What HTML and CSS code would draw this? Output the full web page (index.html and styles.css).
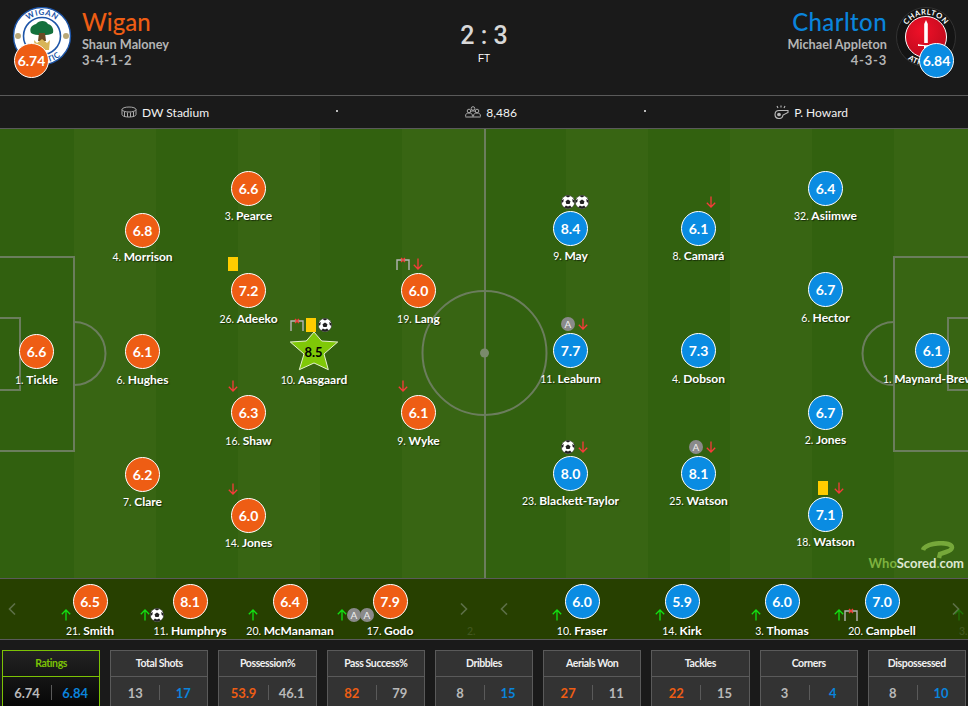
FILE: index.html
```html
<!DOCTYPE html>
<html lang="en">
<head>
<meta charset="utf-8">
<title>Wigan 2 : 3 Charlton</title>
<link rel="stylesheet" href="styles.css">
</head>
<body>
<svg class="defs" width="0" height="0" aria-hidden="true">
  <symbol id="ball" viewBox="0 0 14 14">
    <circle cx="7" cy="7" r="6.7" fill="#fff" stroke="#222" stroke-width=".5"/>
    <path d="M7 4.400 9.500 6.200 8.600 9.100H5.400L4.500 6.200Z" fill="#222"/>
    <path d="M7 .3 9.600 1 7 2.400 4.400 1ZM13.400 5.200 13.600 8 11.700 6.900 11.200 4ZM.6 5.200.4 8 2.300 6.900 2.800 4ZM3.100 12.400 4.900 10.600 7 11.600 9.100 10.600 10.900 12.400 7 13.700Z" fill="#222"/>
  </symbol>
  <symbol id="down" viewBox="0 0 12 12">
    <path d="M6 .5V11M1.800 6.800 6 11l4.200-4.200" fill="none" stroke="#f93a3a" stroke-width="1.300"/>
  </symbol>
  <symbol id="up" viewBox="0 0 12 12">
    <path d="M6 11.500V1M1.800 5.200 6 1l4.200 4.200" fill="none" stroke="#12e012" stroke-width="1.300"/>
  </symbol>
  <symbol id="miss" viewBox="0 0 14 14">
    <path d="M1 13V3h12v10" fill="none" stroke="#b5b5b5" stroke-width="1.400"/>
    <path d="M5 1l4 4M9 1L5 5" fill="none" stroke="#f33a3a" stroke-width="1.300"/>
  </symbol>
</svg>

<header class="header">
  <div class="team">
    <div class="crest">
      <svg class="crest-svg" viewBox="0 0 60 60" width="60" height="60">
        <defs>
          <path id="wigan-top" d="M9 29a21 21 0 0 1 42 0"/>
          <path id="wigan-bot" d="M3 29a27 27 0 0 0 54 0"/>
        </defs>
        <circle cx="30" cy="29" r="28.500" fill="#fff" stroke="#1d55a8" stroke-width="1.400"/>
        <circle cx="30" cy="29" r="18.500" fill="#fff" stroke="#1d55a8" stroke-width="1.600"/>
        <text class="crest-wigan"><textPath href="#wigan-top" startOffset="50%" text-anchor="middle">WIGAN</textPath></text>
        <text class="crest-wigan"><textPath href="#wigan-bot" startOffset="50%" text-anchor="middle">ATHLETIC</textPath></text>
        <circle cx="6" cy="29" r="3" fill="#b9a877"/>
        <circle cx="54" cy="29" r="3" fill="#b9a877"/>
        <path d="M19 26c-2-5 1-8 5-9 3-4 10-4 12 0 4 1 6 5 5 9-4 3-18 3-22 0Z" fill="#14703c"/>
        <path d="M27 26h6l1 8h-8Z" fill="#6d4a24"/>
        <path d="M22 33l3 3 5-4 5 4 3-3-1 10H23Z" fill="#d8b558"/>
      </svg>
      <span class="team-rating home-bg">6.74</span>
    </div>
    <div class="team-text">
      <h1 class="team-name home-text">Wigan</h1>
      <div class="manager">Shaun Maloney</div>
      <div class="formation">3-4-1-2</div>
    </div>
  </div>
  <div class="score">
    <div class="score-value">2 : 3</div>
    <div class="score-status">FT</div>
  </div>
  <div class="team team-away">
    <div class="team-text">
      <h1 class="team-name away-text">Charlton</h1>
      <div class="manager">Michael Appleton</div>
      <div class="formation">4-3-3</div>
    </div>
    <div class="crest">
      <svg class="crest-svg" viewBox="0 0 60 60" width="60" height="60">
        <defs>
          <path id="charlton-top" d="M7.500 30a22.500 22.500 0 0 1 45 0"/>
          <path id="charlton-bot" d="M1.500 30a28.500 28.500 0 0 0 57 0"/>
          <radialGradient id="red" cx=".4" cy=".35" r=".8"><stop offset="0" stop-color="#f01028"/><stop offset="1" stop-color="#b80a1c"/></radialGradient>
        </defs>
        <circle cx="30" cy="30" r="29.500" fill="#141414" stroke="#333"/>
        <circle cx="30" cy="30" r="20.500" fill="url(#red)" stroke="#fff"/>
        <text class="crest-charlton"><textPath href="#charlton-top" startOffset="50%" text-anchor="middle">CHARLTON</textPath></text>
        <text class="crest-charlton"><textPath href="#charlton-bot" startOffset="50%" text-anchor="middle">ATHLETIC</textPath></text>
        <path d="M30 13l1.800 4V36h-3.600V17Z" fill="#fff"/>
        <path d="M22 37c3 1.500 13 1.500 16 0v2H32v8h-4v-8H22Z" fill="#fff"/>
      </svg>
      <span class="team-rating away-bg">6.84</span>
    </div>
  </div>
</header>

<section class="info">
  <div class="info-item">
    <svg class="info-icon" viewBox="0 0 16 12" width="16" height="12"><g fill="none" stroke="#aaa"><ellipse cx="8" cy="3.500" rx="7" ry="2.500"/><path d="M1 3.500v5c0 1.500 3 2.500 7 2.500s7-1 7-2.500v-5M3.500 6v5M6.500 6.500v4.500M9.500 6.500v4.500M12.500 6v5"/></g></svg>
    <span>DW Stadium</span>
  </div>
  <span class="info-dot"></span>
  <div class="info-item">
    <svg class="info-icon" viewBox="0 0 16 12" width="16" height="12"><g fill="none" stroke="#aaa"><circle cx="4" cy="5" r="1.800"/><circle cx="12" cy="5" r="1.800"/><circle cx="8" cy="2.500" r="1.800"/><path d="M.5 10.500c0-3 1.500-3.500 3.500-3.500s3.500.5 3.500 3.500M8.500 10.500c0-3 1.500-3.500 3.500-3.500s3.500.5 3.500 3.500M.5 11h15M5 6c1-1.500 5-1.500 6 0"/></g></svg>
    <span>8,486</span>
  </div>
  <span class="info-dot"></span>
  <div class="info-item">
    <svg class="info-icon" viewBox="0 0 16 14" width="16" height="14"><g fill="none" stroke="#bbb" stroke-width="1.100"><path d="M15 5.500H6a4 4 0 1 0 4 4.500l5-2.500Z"/><circle cx="6" cy="9.500" r="1.300" fill="#bbb"/><path d="M5 3l-1-2M8 2.500V.5M11 3l1-2"/></g></svg>
    <span>P. Howard</span>
  </div>
</section>

<section class="pitch">
  <svg class="lines" viewBox="0 0 968 449" width="968" height="449" aria-hidden="true">
    <g fill="none" stroke="#6b7d5d" stroke-width="2">
      <path d="M485 0V449"/>
      <circle cx="484.500" cy="224" r="62"/>
      <path d="M-2 128H74V322H-2M-2 189H20V261H-2"/>
      <path d="M74 193a31.500 31.500 0 0 1 0 63"/>
      <path d="M970 128H894V322H970M970 189H948V261H970"/>
      <path d="M894 193a31.500 31.500 0 0 0 0 63"/>
    </g>
    <circle cx="484.500" cy="224" r="4.500" fill="#7a8a6c"/>
  </svg>

  <div class="player p-tickle"><span class="rating home-bg">6.6</span><span class="name">1. <b>Tickle</b></span></div>
  <div class="player p-morrison"><span class="rating home-bg">6.8</span><span class="name">4. <b>Morrison</b></span></div>
  <div class="player p-hughes"><span class="rating home-bg">6.1</span><span class="name">6. <b>Hughes</b></span></div>
  <div class="player p-clare"><span class="rating home-bg">6.2</span><span class="name">7. <b>Clare</b></span></div>
  <div class="player p-pearce"><span class="rating home-bg">6.6</span><span class="name">3. <b>Pearce</b></span></div>
  <div class="player p-adeeko"><div class="marks"><span class="card"></span></div><span class="rating home-bg">7.2</span><span class="name">26. <b>Adeeko</b></span></div>
  <div class="player p-shaw"><div class="marks"><svg class="arrow"><use href="#down"/></svg></div><span class="rating home-bg">6.3</span><span class="name">16. <b>Shaw</b></span></div>
  <div class="player p-jones"><div class="marks"><svg class="arrow"><use href="#down"/></svg></div><span class="rating home-bg">6.0</span><span class="name">14. <b>Jones</b></span></div>
  <div class="player player-star p-aasgaard">
    <div class="marks"><svg class="icon"><use href="#miss"/></svg><span class="card"></span><svg class="icon"><use href="#ball"/></svg></div>
    <svg class="star" viewBox="0 0 48 40" width="48" height="40"><path d="M24 1 31.700 10 47.700 11 34 23 38.300 38.700 24 32 9.300 38.700 14 23 .3 11 16.300 10Z" fill="#7fc808" stroke="#e6f2cf" stroke-width="1"/></svg>
    <span class="star-value">8.5</span>
    <span class="name">10. <b>Aasgaard</b></span>
  </div>
  <div class="player p-lang"><div class="marks"><svg class="icon"><use href="#miss"/></svg><svg class="arrow"><use href="#down"/></svg></div><span class="rating home-bg">6.0</span><span class="name">19. <b>Lang</b></span></div>
  <div class="player p-wyke"><div class="marks"><svg class="arrow"><use href="#down"/></svg></div><span class="rating home-bg">6.1</span><span class="name">9. <b>Wyke</b></span></div>

  <div class="player p-may"><div class="marks marks-tight"><svg class="icon"><use href="#ball"/></svg><svg class="icon"><use href="#ball"/></svg></div><span class="rating away-bg">8.4</span><span class="name">9. <b>May</b></span></div>
  <div class="player p-leaburn"><div class="marks"><span class="assist">A</span><svg class="arrow"><use href="#down"/></svg></div><span class="rating away-bg">7.7</span><span class="name">11. <b>Leaburn</b></span></div>
  <div class="player p-blackett"><div class="marks"><svg class="icon"><use href="#ball"/></svg><svg class="arrow"><use href="#down"/></svg></div><span class="rating away-bg">8.0</span><span class="name">23. <b>Blackett-Taylor</b></span></div>
  <div class="player p-camara"><div class="marks"><svg class="arrow"><use href="#down"/></svg></div><span class="rating away-bg">6.1</span><span class="name">8. <b>Camará</b></span></div>
  <div class="player p-dobson"><span class="rating away-bg">7.3</span><span class="name">4. <b>Dobson</b></span></div>
  <div class="player p-watson25"><div class="marks"><span class="assist">A</span><svg class="arrow"><use href="#down"/></svg></div><span class="rating away-bg">8.1</span><span class="name">25. <b>Watson</b></span></div>
  <div class="player p-asiimwe"><span class="rating away-bg">6.4</span><span class="name">32. <b>Asiimwe</b></span></div>
  <div class="player p-hector"><span class="rating away-bg">6.7</span><span class="name">6. <b>Hector</b></span></div>
  <div class="player p-jones2"><span class="rating away-bg">6.7</span><span class="name">2. <b>Jones</b></span></div>
  <div class="player p-watson18"><div class="marks"><span class="card"></span><svg class="arrow"><use href="#down"/></svg></div><span class="rating away-bg">7.1</span><span class="name">18. <b>Watson</b></span></div>
  <div class="player p-maynard"><span class="rating away-bg">6.1</span><span class="name">1. <b>Maynard-Brew</b></span></div>

  <div class="brand">
    <svg class="brand-mark" viewBox="0 0 36 18" width="36" height="18"><path d="M3 9C5 3 20 1 28 3c6 2 5 6-2 8l-6 2-1 4" fill="none" stroke="#76a83a" stroke-width="4.500"/></svg>
    <div class="brand-text"><span class="brand-who">Who</span>Scored<span class="brand-who">.</span>com</div>
  </div>
</section>

<section class="bench">
  <div class="bench-half">
    <span class="chev"><svg viewBox="0 0 8 12" width="8" height="12"><path d="M7 .5 1.500 6 7 11.500" fill="none" stroke="#5d6f47" stroke-width="1.600"/></svg></span>
    <div class="bench-track">
      <div class="sub"><div class="marks s-smith"><svg class="arrow"><use href="#up"/></svg></div><span class="rating home-bg">6.5</span><span class="name">21. <b>Smith</b></span></div>
      <div class="sub"><div class="marks marks-over s-humphrys"><svg class="arrow"><use href="#up"/></svg><svg class="icon"><use href="#ball"/></svg></div><span class="rating home-bg">8.1</span><span class="name">11. <b>Humphrys</b></span></div>
      <div class="sub"><div class="marks s-mcmanaman"><svg class="arrow"><use href="#up"/></svg></div><span class="rating home-bg">6.4</span><span class="name">20. <b>McManaman</b></span></div>
      <div class="sub"><div class="marks marks-over s-godo"><svg class="arrow"><use href="#up"/></svg><span class="assist">A</span><span class="assist">A</span></div><span class="rating home-bg">7.9</span><span class="name">17. <b>Godo</b></span></div>
      <div class="sub sub-ghost"><span class="ghost-name">2.</span></div>
    </div>
    <span class="chev"><svg viewBox="0 0 8 12" width="8" height="12"><path d="M1 .5 6.500 6 1 11.500" fill="none" stroke="#5d6f47" stroke-width="1.600"/></svg></span>
  </div>
  <div class="bench-half bench-away">
    <span class="chev"><svg viewBox="0 0 8 12" width="8" height="12"><path d="M7 .5 1.500 6 7 11.500" fill="none" stroke="#5d6f47" stroke-width="1.600"/></svg></span>
    <div class="bench-track">
      <div class="sub"><div class="marks s-fraser"><svg class="arrow"><use href="#up"/></svg></div><span class="rating away-bg">6.0</span><span class="name">10. <b>Fraser</b></span></div>
      <div class="sub"><div class="marks s-kirk"><svg class="arrow"><use href="#up"/></svg></div><span class="rating away-bg">5.9</span><span class="name">14. <b>Kirk</b></span></div>
      <div class="sub"><div class="marks s-thomas"><svg class="arrow"><use href="#up"/></svg></div><span class="rating away-bg">6.0</span><span class="name">3. <b>Thomas</b></span></div>
      <div class="sub"><div class="marks marks-over s-campbell"><svg class="arrow"><use href="#up"/></svg><svg class="icon"><use href="#miss"/></svg></div><span class="rating away-bg">7.0</span><span class="name">20. <b>Campbell</b></span></div>
      <div class="sub sub-ghost"><svg class="arrow ghost-arrow"><use href="#up"/></svg><span class="ghost-name">3.</span></div>
    </div>
    <span class="chev"><svg viewBox="0 0 8 12" width="8" height="12"><path d="M1 .5 6.500 6 1 11.500" fill="none" stroke="#5d6f47" stroke-width="1.600"/></svg></span>
  </div>
</section>

<section class="stats">
  <div class="stat stat-active"><div class="stat-title">Ratings</div><div class="stat-values"><span>6.74</span><span class="away-text">6.84</span></div></div>
  <div class="stat"><div class="stat-title">Total Shots</div><div class="stat-values"><span>13</span><span class="away-text">17</span></div></div>
  <div class="stat"><div class="stat-title">Possession%</div><div class="stat-values"><span class="home-text">53.9</span><span>46.1</span></div></div>
  <div class="stat"><div class="stat-title">Pass Success%</div><div class="stat-values"><span class="home-text">82</span><span>79</span></div></div>
  <div class="stat"><div class="stat-title">Dribbles</div><div class="stat-values"><span>8</span><span class="away-text">15</span></div></div>
  <div class="stat"><div class="stat-title">Aerials Won</div><div class="stat-values"><span class="home-text">27</span><span>11</span></div></div>
  <div class="stat"><div class="stat-title">Tackles</div><div class="stat-values"><span class="home-text">22</span><span>15</span></div></div>
  <div class="stat"><div class="stat-title">Corners</div><div class="stat-values"><span>3</span><span class="away-text">4</span></div></div>
  <div class="stat"><div class="stat-title">Dispossessed</div><div class="stat-values"><span>8</span><span class="away-text">10</span></div></div>
</section>
</body>
</html>
```

FILE: styles.css
```css
* { box-sizing: border-box; }
html, body { margin: 0; height: 706px; overflow: hidden; }
body {
  background: #1a1a1a;
  color: #fff;
  font-family: Lato, "Noto Sans", sans-serif;
  font-size: 12px;
}
.defs { position: absolute; }
.home-bg { background: #ee5d14; }
.away-bg { background: #0a8ce2; }
.home-text { color: #ee5d14; }
.away-text { color: #0a84dc; }

/* Header */
.header {
  height: 96px;
  border-bottom: 1px solid #5a5a5a;
  display: grid;
  grid-template-columns: 1fr auto 1fr;
  padding: 7px 12px 0;
}
.team { display: flex; gap: 10px; align-items: flex-start; }
.team-away { justify-content: flex-end; gap: 9px; }
.team-away .team-text { text-align: right; }
.crest { position: relative; width: 60px; height: 60px; flex: none; }
.crest-svg { display: block; }
.crest-wigan { font: 700 8px Lato, sans-serif; fill: #1d55a8; letter-spacing: .5px; }
.crest-charlton { font: 700 7.500px Lato, sans-serif; fill: #fff; letter-spacing: .6px; }
.team-rating {
  position: absolute;
  top: 36px;
  left: 2px;
  width: 35px;
  height: 35px;
  border: 1px solid #fff;
  border-radius: 50%;
  display: flex;
  align-items: center;
  justify-content: center;
  font-weight: 700;
  font-size: 14px;
}
.team-away .team-rating { left: 23px; }
.team-text { padding-top: 1px; }
.team-name { margin: 0; font-size: 24px; line-height: 28px; font-weight: 500; }
.team-away .team-name { letter-spacing: .4px; }
.manager { font-weight: 700; font-size: 12.700px; line-height: 16px; color: #b4b4b4; }
.formation { font-weight: 700; font-size: 13px; line-height: 16px; letter-spacing: .8px; color: #b4b4b4; }

.score { text-align: center; width: 120px; padding-top: 15px; }
.score-value { font: 500 25px/28px Roboto, sans-serif; color: #d8d8d8; }
.score-status { font: 400 10px/12px "Liberation Sans", sans-serif; margin-top: 3px; }

/* Info bar */
.info {
  height: 33px;
  border-bottom: 1px solid #5a5a5a;
  display: flex;
  align-items: center;
  justify-content: space-between;
  padding: 0 120px 0 121px;
  font-size: 12px;
  color: #f2f2f2;
}
.info-item { display: flex; align-items: center; gap: 5px; }
.info-icon { display: block; }
.info-dot { width: 2px; height: 2px; background: #bbb; margin: -2px 1px 0 0; }

/* Pitch */
.pitch {
  position: relative;
  height: 449px;
  overflow: hidden;
  background: linear-gradient(90deg,
    #31600f 0 74px, #386513 74px 156px,
    #32610f 156px 238px, #386513 238px 320px,
    #32610f 320px 402px, #386513 402px 484px,
    #32610f 484px 566px, #386513 566px 648px,
    #32610f 648px 730px, #386513 730px 812px,
    #32610f 812px 894px, #386513 894px 968px);
}
.lines { position: absolute; inset: 0; }
.player { position: absolute; width: 35px; height: 35px; }
.rating {
  width: 35px;
  height: 35px;
  border: 1px solid #fff;
  border-radius: 50%;
  display: flex;
  align-items: center;
  justify-content: center;
  font-weight: 700;
  font-size: 14px;
}
.name {
  position: absolute;
  left: 50%;
  top: 38px;
  transform: translateX(-50%);
  white-space: nowrap;
  font-size: 10.500px;
  line-height: 14px;
  text-shadow: 1px 1px 1px rgba(0, 0, 0, .55);
}
.name b { font-weight: 700; font-size: 12px; }
.p-tickle .name, .p-hughes .name, .p-adeeko .name, .p-shaw .name, .p-lang .name,
.p-wyke .name, .p-leaburn .name, .p-dobson .name, .p-hector .name { top: 39px; }
.p-morrison .name { top: 37px; }
.p-maynard .name { margin-left: -4px; top: 39px; }

.marks {
  position: absolute;
  top: -16px;
  left: -4px;
  height: 14px;
  display: flex;
  align-items: center;
  gap: 2px;
}
.marks-tight { gap: 0; }
.marks-over { gap: 0; }
.marks-over > * + * { margin-left: -1px; }
.arrow { width: 12px; height: 12px; display: block; flex: none; }
.icon { width: 14px; height: 14px; display: block; flex: none; }
.card { width: 10px; height: 14px; background: #fc0; display: block; flex: none; }
.assist {
  width: 14px;
  height: 14px;
  flex: none;
  border-radius: 50%;
  background: #8a8a8a;
  color: #eee;
  font-size: 10px;
  line-height: 14px;
  text-align: center;
}

.p-tickle { left: 19px; top: 205px; }
.p-morrison { left: 125px; top: 84px; }
.p-hughes { left: 125px; top: 205px; }
.p-clare { left: 125px; top: 328px; }
.p-pearce { left: 231px; top: 42px; }
.p-adeeko { left: 231px; top: 144px; }
.p-adeeko .marks { left: -3px; }
.p-shaw { left: 231px; top: 266px; }
.p-jones { left: 231px; top: 369px; }
.p-lang { left: 401px; top: 144px; }
.p-lang .marks { left: -5px; }
.p-wyke { left: 401px; top: 266px; }
.p-may { left: 553px; top: 82px; }
.p-may .marks { left: 8px; }
.p-leaburn { left: 553px; top: 204px; }
.p-leaburn .marks { left: 8px; }
.p-blackett { left: 553px; top: 327px; }
.p-blackett .marks { left: 8px; }
.p-camara { left: 681px; top: 82px; }
.p-camara .marks { left: 24px; }
.p-dobson { left: 681px; top: 204px; }
.p-watson25 { left: 681px; top: 327px; }
.p-watson25 .marks { left: 8px; }
.p-asiimwe { left: 808px; top: 42px; }
.p-hector { left: 808px; top: 143px; }
.p-jones2 { left: 808px; top: 266px; }
.p-watson18 { left: 808px; top: 368px; }
.p-watson18 .marks { left: 10px; }
.p-watson18 .card { margin-right: 3px; }
.p-maynard { left: 915px; top: 204px; }

.player-star { width: 48px; height: 40px; }
.p-aasgaard { left: 290px; top: 202px; }
.p-aasgaard .marks { left: 0; top: -13px; }
.star { display: block; }
.star-value {
  position: absolute;
  left: 0;
  right: 1px;
  top: 13px;
  text-align: center;
  font-weight: 700;
  font-size: 13px;
  line-height: 16px;
  color: #000;
}
.p-aasgaard .name { top: 42px; }

.brand {
  position: absolute;
  right: 4px;
  bottom: 8px;
  width: 96px;
  display: flex;
  flex-direction: column;
  align-items: flex-end;
}
.brand-mark { display: block; margin: 0 8px -3px 0; }
.brand-text { font-weight: 700; font-size: 13px; line-height: 14px; color: #dfe8d2; white-space: nowrap; }
.brand-who { color: #7eb23f; }

/* Substitutes */
.bench {
  height: 62px;
  background: #274000;
  border-top: 1px solid #5a5a5a;
  border-bottom: 1px solid #5a5a5a;
  display: grid;
  grid-template-columns: 1fr 1fr;
}
.bench-half {
  display: flex;
  overflow: hidden;
  padding-right: 8px;
  height: 60px;
}
.bench-away { padding: 0 0 0 8px; }
.chev {
  width: 24px;
  flex: none;
  display: flex;
  align-items: center;
  justify-content: center;
}
.bench-track { width: 400px; flex: none; display: flex; margin: 0 12px 0 16px; }
.sub { position: relative; width: 100px; flex: none; padding: 5px 0 0 32.500px; height: 60px; }
.sub .name { top: 45px; }
.sub .marks { top: 29px; }
.s-smith { left: 20px; }
.s-humphrys { left: -1px; }
.s-mcmanaman { left: 7px; }
.s-godo { left: -4px; }
.s-fraser { left: 19px; }
.s-kirk { left: 22px; }
.s-thomas { left: 18px; }
.s-campbell { left: 1px; }
.sub-ghost { padding: 0; width: 100px; }
.ghost-name { position: absolute; left: 27px; top: 45px; line-height: 14px; font-size: 10.500px; opacity: .12; }
.ghost-arrow { position: absolute; left: 21px; top: 30px; opacity: .3; }

/* Stats */
.stats {
  height: 66px;
  overflow: hidden;
  display: grid;
  grid-template-columns: repeat(9, 1fr);
  gap: 10px;
  padding: 10px 2px 0;
}
.stat {
  height: 70px;
  background: #333;
  border: 1px solid #5a5a5a;
}
.stat-title {
  height: 26px;
  border-bottom: 1px solid #5a5a5a;
  text-align: center;
  font-weight: 700;
  font-size: 10.500px;
  letter-spacing: -.4px;
  line-height: 24px;
  color: #f0f0f0;
}
.stat-values {
  position: relative;
  display: grid;
  grid-template-columns: 1fr 1fr;
  padding-top: 8px;
  text-align: center;
  font-weight: 700;
  font-size: 13px;
  line-height: 16px;
  color: #b9b9b9;
}
.stat-values::after {
  content: "";
  position: absolute;
  left: 50%;
  top: 8px;
  width: 1px;
  height: 15px;
  background: #5a5a5a;
}
.stat-values .home-text { color: #ee5d14; }
.stat-values .away-text { color: #0a84dc; }
.stat-active {
  border-color: #7cc205;
  background: linear-gradient(#222, #000);
}
.stat-active .stat-title { border-color: #7cc205; color: #7cc205; }
```
